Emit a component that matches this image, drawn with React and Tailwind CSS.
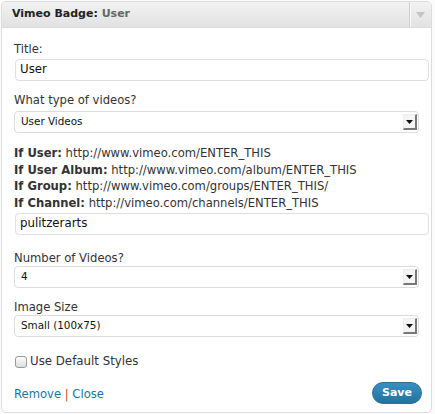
import React from "react";

const font = { fontFamily: '"DejaVu Sans", "Liberation Sans", sans-serif' };

function SelectBox({ value }) {
  return (
    <div className="flex h-[22px] w-[405px] items-center justify-between rounded-[4px] border border-[#dcdcdc] bg-white pl-[6px] pr-[1px]">
      <span className="text-[10.4px] text-[#111]">{value}</span>
      <span className="flex h-[16px] w-[14px] items-center justify-center border-r-2 border-b-2 border-r-[#777] border-b-[#777] border-l border-t border-l-[#eee] border-t-[#eee] bg-[#f4f4f4]">
        <svg width="7" height="4" viewBox="0 0 7 4">
          <polygon points="0,0 7,0 3.5,4" fill="#111" />
        </svg>
      </span>
    </div>
  );
}

function TextInput({ value }) {
  return (
    <div className="flex h-[22px] w-[414px] items-center rounded-[4px] border border-[#dfdfdf] bg-white pl-[4px] text-[11.8px] text-[#111]">
      {value}
    </div>
  );
}

export default function App() {
  return (
    <div className="h-[414px] w-[435px] bg-[#fbfbfb] pl-[1px] pt-[1px]" style={font}>
      <div className="w-[431px] overflow-hidden rounded-[5px] border border-[#dcdcdc] bg-white">
        <div className="flex h-[26px] items-center justify-between border-b border-[#dcdcdc] bg-gradient-to-b from-[#f2f2f2] to-[#e2e2e2]">
          <div className="pl-[10px] text-[11px] font-bold text-[#222]">
            Vimeo Badge<span>:</span> <span className="text-[#666]">User</span>
          </div>
          <div className="flex h-full w-[22px] items-center justify-center border-l border-l-[#d0d0d0] shadow-[inset_1px_0_0_#f8f8f8]">
            <svg width="9" height="6" viewBox="0 0 9 6">
              <polygon points="0,0 9,0 4.5,6" fill="#c4c4c4" />
            </svg>
          </div>
        </div>
        <div className="px-[12px] pb-[8px] text-[11.6px] text-[#333]">
          <div className="mt-[13px] leading-[16px]">Title:</div>
          <div className="mt-[2px] pl-[1px]">
            <TextInput value="User" />
          </div>
          <div className="mt-[11px] leading-[16px]">What type of videos?</div>
          <div className="mt-[3px]">
            <SelectBox value="User Videos" />
          </div>
          <div className="mt-[12px] leading-[16.5px]">
            <div><b>If User:</b> http://www.vimeo.com/ENTER_THIS</div>
            <div><b>If User Album:</b> http://www.vimeo.com/album/ENTER_THIS</div>
            <div><b>If Group:</b> http://www.vimeo.com/groups/ENTER_THIS/</div>
            <div><b>If Channel:</b> http://vimeo.com/channels/ENTER_THIS</div>
          </div>
          <div className="mt-[2px] pl-[1px]">
            <TextInput value="pulitzerarts" />
          </div>
          <div className="mt-[15px] leading-[16px]">Number of Videos?</div>
          <div>
            <SelectBox value="4" />
          </div>
          <div className="mt-[11px] leading-[16px]">Image Size</div>
          <div>
            <SelectBox value="Small (100x75)" />
          </div>
          <div className="mt-[17px] flex h-[16px] items-center gap-[3px] pl-[1px]">
            <span className="inline-block h-[12px] w-[12px] rounded-[3px] border border-[#999] bg-gradient-to-b from-[#fdfdfd] to-[#dedede]" />
            <span className="text-[11.8px] text-[#333]">Use Default Styles</span>
          </div>
          <div className="mt-[12px] flex items-center justify-between">
            <div className="pt-[3px] text-[11.6px] text-[#21759b]">
              Remove <span className="text-[#d54e21]">|</span> Close
            </div>
            <div className="mr-[-3px] flex h-[22px] w-[50px] items-center justify-center rounded-[11px] border border-[#2a6f93] bg-gradient-to-b from-[#3a8fc0] to-[#21749f] text-[11px] font-bold text-white">
              Save
            </div>
          </div>
        </div>
      </div>
    </div>
  );
}
